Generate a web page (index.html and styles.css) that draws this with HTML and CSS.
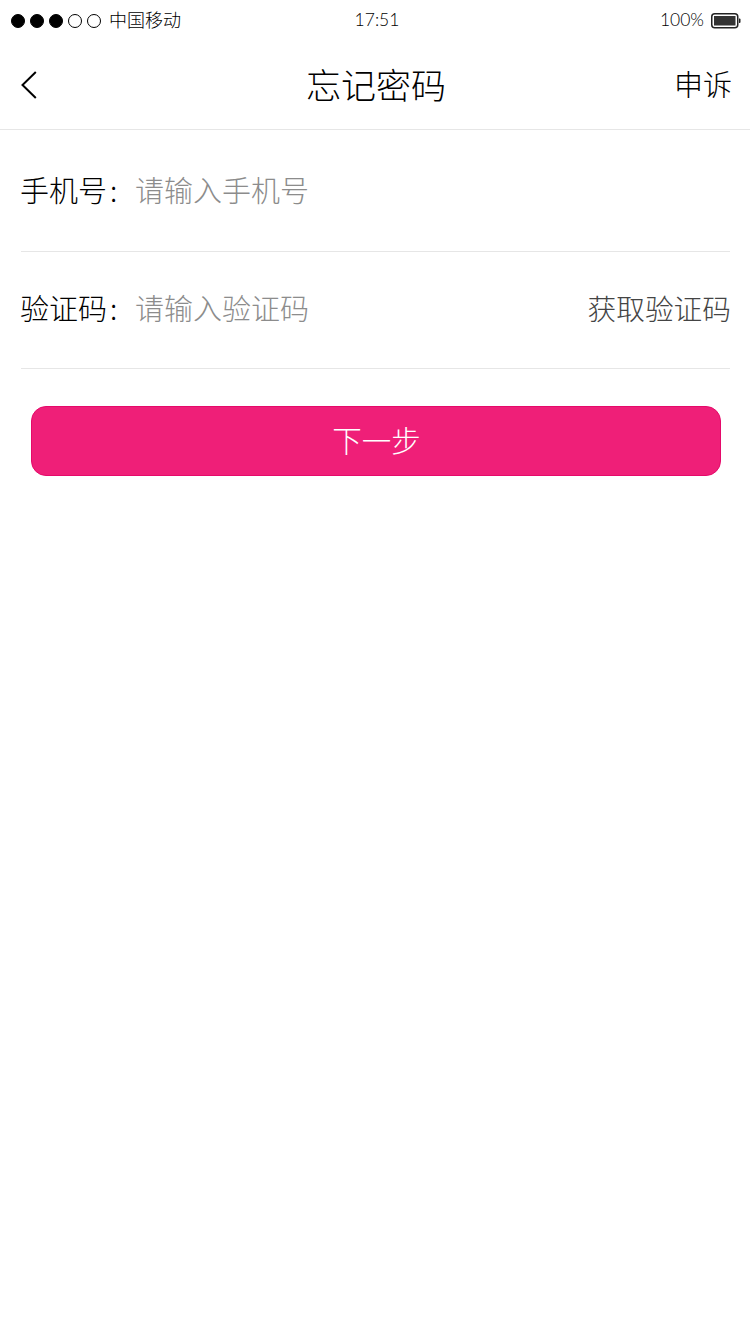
FILE: index.html
```html
<!DOCTYPE html>
<html lang="zh-CN">
<head>
<meta charset="utf-8">
<title>忘记密码</title>
<link rel="stylesheet" href="styles.css">
</head>
<body>
<div class="status">
  <div class="status-left">
    <span class="dot on"></span><span class="dot on"></span><span class="dot on"></span><span class="dot"></span><span class="dot"></span>
    <span class="carrier">中国移动</span>
  </div>
  <div class="time">17:51</div>
  <div class="status-right">
    <span class="pct">100%</span>
    <svg class="battery" width="30" height="16" viewBox="0 0 30 16"><rect x="0.75" y="0.75" width="26" height="14" rx="3" fill="none" stroke="#222" stroke-width="1.5"/><rect x="3" y="3" width="21.5" height="9.5" fill="#333"/><path d="M28 5.5h.5a1 1 0 0 1 1 1v2.500a1 1 0 0 1-1 1H28z" fill="#222"/></svg>
  </div>
</div>
<header class="nav">
  <svg class="back" width="18" height="28" viewBox="0 0 18 28"><path d="M14.800 1 1.500 14l13.300 13" fill="none" stroke="#000" stroke-width="2"/></svg>
  <h1 class="title">忘记密码</h1>
  <span class="appeal">申诉</span>
</header>
<main class="form">
  <div class="row row-first">
    <span class="label">手机号<span class="colon">:</span></span>
    <span class="hint">请输入手机号</span>
  </div>
  <div class="row row-second">
    <span class="label">验证码<span class="colon">:</span></span>
    <span class="hint">请输入验证码</span>
    <span class="code">获取验证码</span>
  </div>
  <button class="next" type="button">下一步</button>
</main>
</body>
</html>
```
FILE: styles.css
```css
* { box-sizing: border-box; }
html, body { margin: 0; padding: 0; background: #fff; }
body {
  width: 750px;
  height: 1334px;
  overflow: hidden;
  font-family: "Noto Sans CJK SC", "Liberation Sans", sans-serif;
  font-weight: 300;
  color: #000;
}
.status {
  height: 41px;
  padding: 0 9px 0 11px;
  display: grid;
  grid-template-columns: 1fr auto 1fr;
  align-items: center;
}
.status-left { display: flex; align-items: center; gap: 5px; }
.dot {
  width: 14px;
  height: 14px;
  border-radius: 50%;
  border: 1px solid #000;
}
.dot.on { background: #000; }
.carrier { margin: 0 0 3px 3px; font-size: 18px; line-height: 24px; color: #000; }
.time { font-family: "Lato", sans-serif; font-size: 17.500px; font-weight: 300; color: #000; margin: 0 0 2px 2px; }
.status-right { display: flex; justify-content: flex-end; align-items: center; gap: 7px; }
.pct { font-family: "Lato", sans-serif; font-size: 17.500px; font-weight: 300; color: #000; margin-bottom: 2px; }
.nav {
  height: 89px;
  padding: 0 19px 0 21px;
  border-bottom: 1px solid #e6e6e6;
  display: grid;
  grid-template-columns: 1fr auto 1fr;
  align-items: center;
}
.back { display: block; }
.title { margin: 0 0 2px; font-size: 35px; font-weight: 300; line-height: 44px; }
.appeal { justify-self: end; font-size: 29px; line-height: 40px; margin: 0 -1px 4px 0; }
.form { padding: 0 20px 0 21px; display: flex; flex-direction: column; }
.row {
  display: flex;
  align-items: center;
  border-bottom: 1px solid #e6e6e6;
  font-size: 29px;
}
.row-first { height: 122px; padding-bottom: 4px; }
.row-second { height: 117px; padding-bottom: 6px; }
.label { width: 115px; color: #000; margin-left: -1px; }
.colon { margin-left: 3px; }
.hint { color: #8c8c8c; flex: 1; }
.code { color: #444; font-size: 28.700px; margin-right: -1px; }
.next {
  display: block;
  width: 690px;
  height: 70px;
  margin: 37px 0 0 10px;
  background: #ef1f78;
  border: 1px solid #e5096a;
  border-radius: 15px;
  color: #fff;
  font: inherit;
  font-size: 29.500px;
  padding: 0 0 5px 1px;
}
```
